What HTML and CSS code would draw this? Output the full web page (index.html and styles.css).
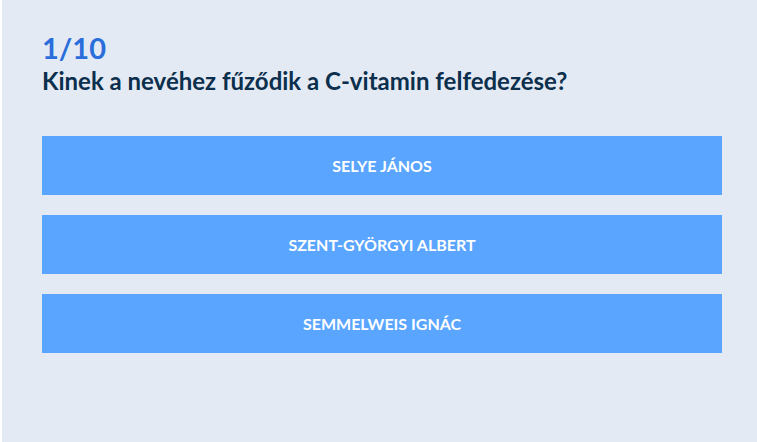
FILE: index.html
```html
<!DOCTYPE html>
<html lang="hu">
<head>
<meta charset="utf-8">
<title>Kvíz</title>
<link rel="stylesheet" href="styles.css">
</head>
<body>
<main class="page">
  <header class="quiz-head">
    <div class="counter">1/10</div>
    <h1 class="question">Kinek a nevéhez fűződik a C-vitamin felfedezése?</h1>
  </header>
  <div class="answers">
    <button class="answer">SELYE JÁNOS</button>
    <button class="answer">SZENT-GYÖRGYI ALBERT</button>
    <button class="answer">SEMMELWEIS IGNÁC</button>
  </div>
</main>
</body>
</html>
```
FILE: styles.css
```css
html, body {
  margin: 0;
  padding: 0;
  background: #ffffff;
  height: 100%;
}
body {
  font-family: Lato, "Open Sans", sans-serif;
}
.page {
  margin-left: 2px;
  min-height: 100vh;
  box-sizing: border-box;
  background: #e4eaf4;
  padding: 30px 35px 0 40px;
}
.quiz-head {
  display: flex;
  flex-direction: column;
}
.counter {
  color: #2a6edb;
  font-size: 29px;
  font-weight: 700;
  line-height: 35px;
}
.question {
  margin: 0;
  color: #0b2f4c;
  font-size: 24px;
  font-weight: 700;
  line-height: 31px;
}
.answers {
  margin-top: 40px;
  display: flex;
  flex-direction: column;
  gap: 20px;
}
.answer {
  height: 59px;
  border: 0;
  background: #5aa5ff;
  color: #ffffff;
  font-family: Lato, sans-serif;
  font-size: 16px;
  font-weight: 700;
  text-transform: uppercase;
  cursor: pointer;
  padding: 0;
}
```
